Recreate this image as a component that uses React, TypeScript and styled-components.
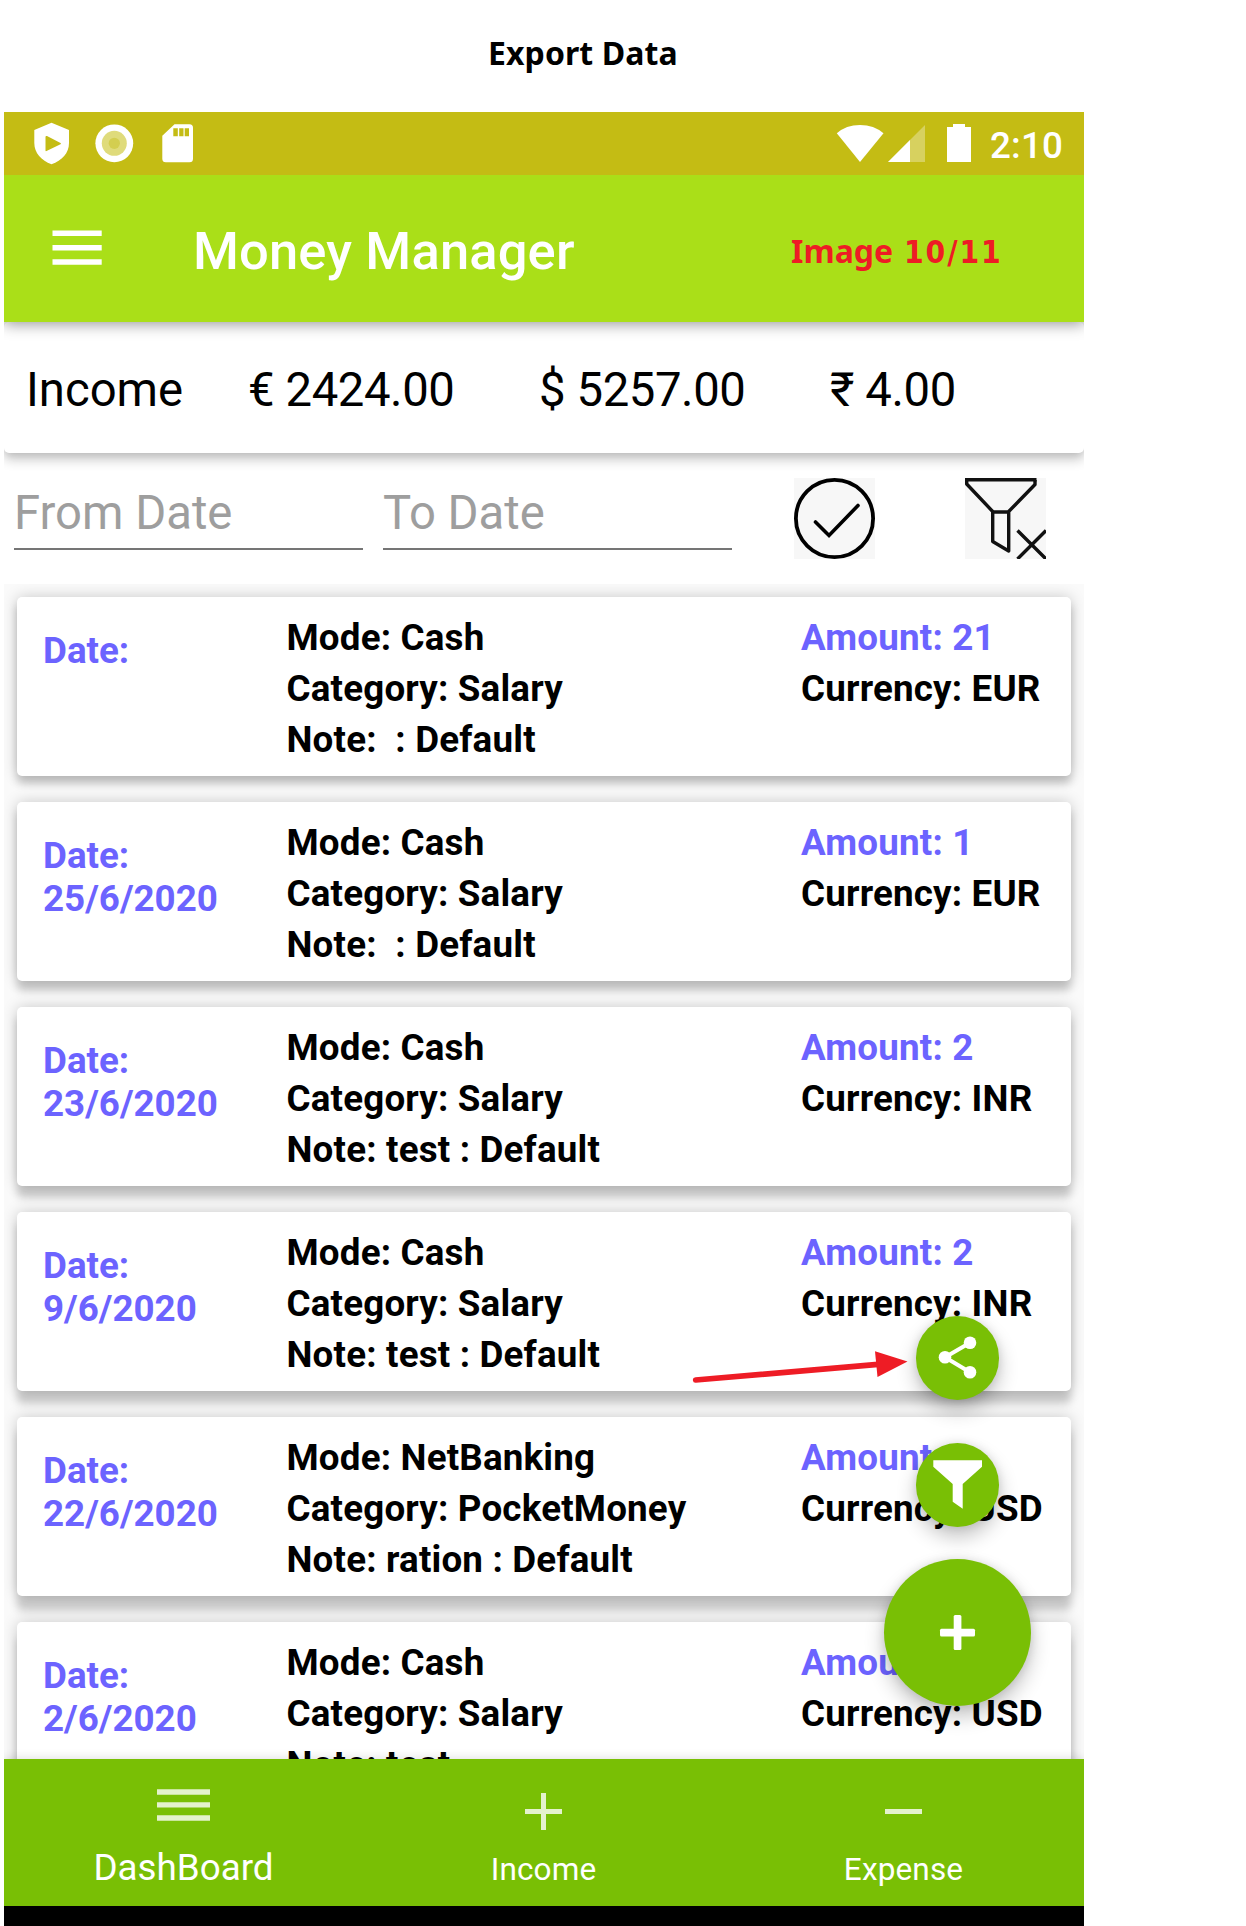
import React from 'react';
import styled, { createGlobalStyle } from 'styled-components';

const GlobalStyle = createGlobalStyle`
  * { box-sizing: border-box; }
  body { margin: 0; background: #fff; font-family: Roboto, "Liberation Sans", sans-serif; }
`;

const Page = styled.main`
  width: 1246px;
  height: 1926px;
  padding-left: 4px;
  overflow: hidden;
  background: #fff;
`;

const Caption = styled.h1`
  margin: 0;
  height: 112px;
  padding: 31px 0 0 484px;
  font: 700 32px/44px "Noto Sans", sans-serif;
  letter-spacing: 0.08px;
  color: #000;
  white-space: nowrap;
`;

const Phone = styled.div`
  position: relative;
  display: flex;
  flex-direction: column;
  width: 1080px;
  height: 1814px;
  overflow: hidden;
  background: #fff;
`;

const StatusBar = styled.div`
  position: relative;
  z-index: 3;
  display: flex;
  flex: none;
  justify-content: space-between;
  height: 63px;
  padding: 0 21px 0 30px;
  background: #c4bc14;
  color: #fff;
`;

const StatusGroup = styled.div`
  display: flex;
  align-items: center;
`;

const Clock = styled.span`
  margin-left: 18px;
  padding-top: 4px;
  font-size: 36.75px;
  font-weight: 500;
  line-height: 43px;
  letter-spacing: 0.15px;
`;

const AppBar = styled.header`
  position: relative;
  z-index: 2;
  display: flex;
  flex: none;
  align-items: flex-start;
  height: 147px;
  padding-left: 48px;
  background: #aadf18;
  box-shadow: 0 2px 14px rgba(0, 0, 0, 0.42);
`;

const MenuIcon = styled.svg`
  flex: none;
  margin-top: 55px;
`;

const Title = styled.h2`
  margin: 45px 0 0 91px;
  width: 598px;
  font-size: 52.5px;
  font-weight: 500;
  line-height: 62px;
  letter-spacing: 0.15px;
  color: #fff;
  white-space: nowrap;
`;

const Counter = styled.span`
  margin-top: 54px;
  font: 700 32px/44px "Noto Sans", sans-serif;
  color: #ee1c25;
  white-space: nowrap;
`;

const CounterValue = styled.span`
  margin-left: 2.5px;
  font-family: "DejaVu Sans Condensed", "DejaVu Sans", sans-serif;
  font-stretch: condensed;
  font-size: 31.5px;
  letter-spacing: 1.9px;
`;

const Summary = styled.section`
  position: relative;
  z-index: 1;
  display: grid;
  flex: none;
  grid-template-columns: 222px 291px 291px auto;
  align-items: center;
  height: 131px;
  padding: 5px 0 0 22px;
  border-radius: 5px;
  background: #fff;
  box-shadow: 0 0 10px rgba(0, 0, 0, 0.14), 0 7px 12px rgba(0, 0, 0, 0.2);
  font-size: 47.25px;
  color: #000;
  white-space: nowrap;
`;

const Total = styled.span`
  letter-spacing: -0.4px;
`;

const FilterRow = styled.section`
  display: flex;
  flex: none;
  height: 131px;
  padding-left: 10px;
`;

const DateField = styled.div`
  width: 349px;
  height: 97px;
  margin-right: 20px;
  padding-top: 33px;
  border-bottom: 2px solid #757575;
  font-size: 47.25px;
  line-height: 55px;
  color: #9e9e9e;
`;

const ActionIcon = styled.svg<{ $gap: number }>`
  flex: none;
  margin: 25px 0 0 ${(p) => p.$gap}px;
  background: #f7f7f7;
`;

const List = styled.section`
  display: flex;
  flex: 1;
  flex-direction: column;
  gap: 26px;
  min-height: 0;
  padding: 13px 13px 0;
  overflow: hidden;
  background: #fafafa;
`;

/* The drop shadow lengthens for cards further down the screen. */
const Card = styled.article<{ $depth: number }>`
  display: grid;
  flex: none;
  grid-template-columns: 243.5px 514.5px auto;
  height: 179px;
  padding: 15px 0 0 26px;
  border-radius: 5px;
  background: #fff;
  box-shadow: 0 0 15px rgba(0, 0, 0, 0.2),
    0 ${(p) => 8 + p.$depth * 1.6}px 9px rgba(0, 0, 0, 0.18);
  font-size: 36.75px;
  font-weight: 700;
  line-height: 51px;
  letter-spacing: 0.18px;
  color: #000;
  white-space: pre;
`;

const DateCell = styled.div`
  padding-top: 17px;
  line-height: 43px;
  letter-spacing: 0;
  color: #6c63ff;
`;

const Amount = styled.div`
  color: #6c63ff;
`;

const FabStack = styled.div`
  position: absolute;
  z-index: 3;
  top: 1204px;
  right: 53px;
  display: flex;
  flex-direction: column;
  align-items: center;
  width: 147px;
`;

const Fab = styled.div<{ $size: number; $after: number }>`
  display: flex;
  flex: none;
  width: ${(p) => p.$size}px;
  height: ${(p) => p.$size}px;
  margin-bottom: ${(p) => p.$after}px;
  border-radius: 50%;
  background: #79bf05;
  box-shadow: 0 0 10px rgba(0, 0, 0, 0.1), 0 10px 20px rgba(0, 0, 0, 0.24);
`;

const Pointer = styled.svg`
  position: absolute;
  z-index: 4;
  top: 1233px;
  left: 686px;
`;

const BottomNav = styled.nav`
  position: relative;
  z-index: 4;
  display: grid;
  flex: none;
  grid-template-columns: repeat(3, 1fr);
  height: 147px;
  background: #79bf05;
  box-shadow: 0 0 10px rgba(0, 0, 0, 0.15);
  color: #fff;
`;

const NavItem = styled.div`
  display: flex;
  flex-direction: column;
  align-items: center;
  padding-right: 1px;
`;

const NavIcon = styled.svg`
  flex: none;
  opacity: 0.8;
`;

const NavLabel = styled.span<{ $active?: boolean }>`
  margin-top: ${(p) => (p.$active ? 12 : 17)}px;
  font-size: ${(p) => (p.$active ? 36.75 : 31.5)}px;
  line-height: ${(p) => (p.$active ? 43 : 37)}px;
  letter-spacing: ${(p) => (p.$active ? 0 : 0.15)}px;
`;

const SystemBar = styled.div`
  position: relative;
  z-index: 5;
  flex: none;
  height: 20px;
  background: #000;
`;

type Entry = {
  date: string;
  mode: string;
  category: string;
  note: string;
  amount: string;
  currency: string;
};

const entries: Entry[] = [
  { date: '', mode: 'Cash', category: 'Salary', note: ' : Default', amount: '21', currency: 'EUR' },
  { date: '25/6/2020', mode: 'Cash', category: 'Salary', note: ' : Default', amount: '1', currency: 'EUR' },
  { date: '23/6/2020', mode: 'Cash', category: 'Salary', note: 'test : Default', amount: '2', currency: 'INR' },
  { date: '9/6/2020', mode: 'Cash', category: 'Salary', note: 'test : Default', amount: '2', currency: 'INR' },
  { date: '22/6/2020', mode: 'NetBanking', category: 'PocketMoney', note: 'ration : Default', amount: '', currency: 'USD' },
  { date: '2/6/2020', mode: 'Cash', category: 'Salary', note: 'test', amount: '', currency: 'USD' },
];

export default function App() {
  return (
    <>
      <GlobalStyle />
      <Page>
        <Caption>Export Data</Caption>
        <Phone>
          <StatusBar>
            <StatusGroup>
              <svg width="160" height="63" viewBox="34 112 160 63" fill="#fff">
                <path fillRule="evenodd" d="M51.5 122.7 69 130v13c0 10-7 17.500-17.500 21.200C41.500 160.500 34.300 153 34.300 143v-13ZM45.500 137v13.500q0 1 1 .5l14-6.800q1-.6 0-1.200L47 136q-1.500-.5-1.500 1Z" />
                <circle cx="114.300" cy="143.300" r="18.900" />
                <circle cx="114.300" cy="143.300" r="12.500" fill="#dfdb7b" />
                <circle cx="114.300" cy="143.300" r="5.600" fill="#d3ce50" />
                <path fillRule="evenodd" d="M174.500 124.300h15a3.500 3.500 0 0 1 3.500 3.500v31a3.500 3.500 0 0 1-3.500 3.500h-23.700a3.500 3.500 0 0 1-3.500-3.500v-23ZM173.300 128.300v8h4.500v-8ZM179.200 128.300v8h4.300v-8ZM184.700 128.300v8h4.300v-8Z" />
              </svg>
            </StatusGroup>
            <StatusGroup>
              <svg width="136" height="63" viewBox="836 112 136 63" fill="#fff">
                <path d="M860 162 836.800 133.300Q846 125 860 125t23.500 8.300Z" />
                <path d="M925 125v37h-37Z" opacity=".32" />
                <path d="M910 140v22h-22Z" />
                <path d="M953 124h12v3h6v35h-24v-35h6Z" />
              </svg>
              <Clock>2:10</Clock>
            </StatusGroup>
          </StatusBar>
          <AppBar>
            <MenuIcon width="50" height="36" viewBox="0 0 50 36" fill="#fff">
              <path d="M.5.600h49.200V6H.5ZM.5 15h49.200v5.400H.5ZM.5 29.300h49.200v5.400H.5Z" />
            </MenuIcon>
            <Title>Money Manager</Title>
            <Counter>
              Image <CounterValue>10/11</CounterValue>
            </Counter>
          </AppBar>
          <Summary>
            <span>Income</span>
            <Total>€ 2424.00</Total>
            <Total>$ 5257.00</Total>
            <Total>₹ 4.00</Total>
          </Summary>
          <FilterRow>
            <DateField>From Date</DateField>
            <DateField>To Date</DateField>
            <ActionIcon $gap={42} width="81" height="81" fill="none" stroke="#000">
              <circle cx="40.500" cy="40.500" r="38.600" strokeWidth="3.800" />
              <path d="m21.500 44 13.500 13.500 29-30" strokeWidth="3.600" strokeLinecap="round" />
            </ActionIcon>
            <ActionIcon $gap={90} width="81" height="81" fill="none" stroke="#111" strokeWidth="3.400">
              <path d="M1.700 2v4l26 27.500v30l16 9.500V33.500L70 6.500V2M27.700 34h16" strokeLinejoin="round" />
              <path d="M0 1.700h71.500" strokeWidth="3.600" />
              <path d="m52.500 52.500 28.500 28.500M81 52.500 52.500 81" />
            </ActionIcon>
          </FilterRow>
          <List>
            {entries.map((e, i) => (
              <Card key={i} $depth={i}>
                <DateCell>
                  <div>Date:</div>
                  <div>{e.date}</div>
                </DateCell>
                <div>
                  <div>Mode: {e.mode}</div>
                  <div>Category: {e.category}</div>
                  <div>Note: {e.note}</div>
                </div>
                <div>
                  <Amount>Amount: {e.amount}</Amount>
                  <div>Currency: {e.currency}</div>
                </div>
              </Card>
            ))}
          </List>
          <FabStack>
            <Fab $size={83.5} $after={43.5}>
              <svg width="84" height="84" fill="#fff" stroke="#fff">
                <path d="m54 26.700-25 14.600 25 15" fill="none" strokeWidth="4" />
                <g stroke="none">
                  <circle cx="54" cy="26.700" r="6.300" />
                  <circle cx="29" cy="41.300" r="6.300" />
                  <circle cx="54" cy="56.300" r="6.300" />
                </g>
              </svg>
            </Fab>
            <Fab $size={83.5} $after={32.5}>
              <svg width="84" height="84" fill="#fff">
                <path d="M17.300 17.300H66v6.500L46.700 41v24.700l-10-7V41L17.300 23.800Z" />
              </svg>
            </Fab>
            <Fab $size={147} $after={0}>
              <svg width="147" height="147" fill="#fff">
                <rect x="56" y="69.700" width="35" height="7.700" rx="1.500" />
                <rect x="69.700" y="56" width="7.700" height="35" rx="1.500" />
              </svg>
            </Fab>
          </FabStack>
          <Pointer width="222" height="40" viewBox="690 1345 222 40">
            <path d="M695.700 1380 878 1364.300" stroke="#ee1c25" strokeWidth="5.700" strokeLinecap="round" />
            <path d="m875 1351.300 32.500 10.200-30 15.500Z" fill="#ee1c25" />
          </Pointer>
          <BottomNav>
            <NavItem>
              <NavIcon width="53" height="75" fill="#fff" viewBox="0 0 53 75">
                <path d="M0 30.300h53v5.400H0ZM0 43.200h53v5.400H0ZM0 56.300h53v5.400H0Z" />
              </NavIcon>
              <NavLabel $active>DashBoard</NavLabel>
            </NavItem>
            <NavItem>
              <NavIcon width="37" height="75" fill="#fff" viewBox="0 0 37 75">
                <path d="M16 34h5v16h16v5H21v16h-5V55H0v-5h16Z" />
              </NavIcon>
              <NavLabel>Income</NavLabel>
            </NavItem>
            <NavItem>
              <NavIcon width="37" height="75" fill="#fff" viewBox="0 0 37 75">
                <path d="M0 50h37v5H0Z" />
              </NavIcon>
              <NavLabel>Expense</NavLabel>
            </NavItem>
          </BottomNav>
          <SystemBar />
        </Phone>
      </Page>
    </>
  );
}
